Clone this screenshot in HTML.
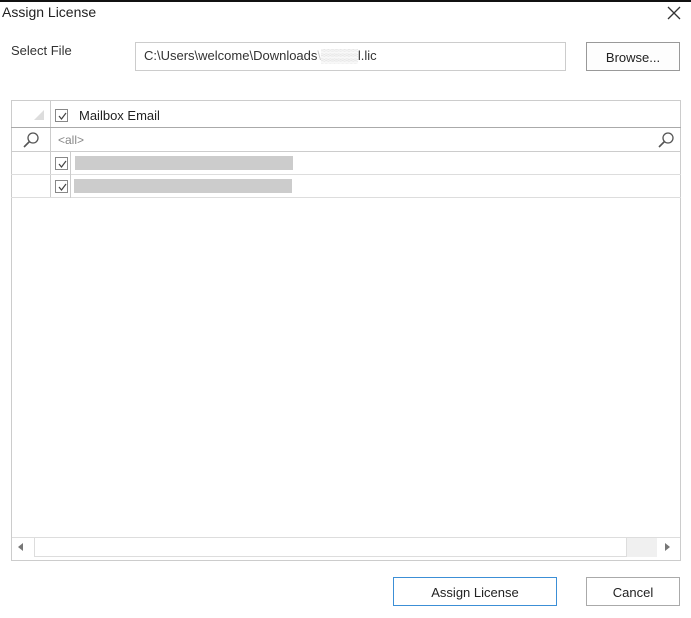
<!DOCTYPE html>
<html><head><style>
body{margin:0;width:691px;height:618px;background:#fff;position:relative;overflow:hidden;font-family:"Liberation Sans",sans-serif;color:#222;}
.a{position:absolute;box-sizing:border-box;}
.cb{position:absolute;width:13px;height:13px;border:1px solid #888;box-sizing:border-box;background:#fff;}
.cb svg{position:absolute;left:1px;top:1px}
</style></head><body>
<div class="a" style="left:0;top:0;width:691px;height:2px;background:#111"></div>
<div class="a" style="left:2px;top:4px;font-size:14px">Assign License</div>
<svg class="a" style="left:667px;top:6px" width="14" height="14"><path d="M1 1L13 13M13 1L1 13" stroke="#333" stroke-width="1.3"/></svg>
<div class="a" style="left:11px;top:43px;font-size:13px;color:#333">Select File</div>
<div class="a" style="left:135px;top:42px;width:431px;height:29px;border:1px solid #ccc;font-size:13px;padding:5px 0 0 8px;color:#333">C:\Users\welcome\Downloads<span style="color:#ccc">\▒▒▒▒</span>l.lic</div>
<div class="a" style="left:586px;top:42px;width:94px;height:29px;border:1px solid #999;font-size:13px;text-align:center;padding-top:7px;background:#fdfdfd">Browse...</div>
<div class="a" style="left:11px;top:100px;width:670px;height:461px;border:1px solid #ccc"></div>
<div class="a" style="left:11px;top:100px;width:40px;height:98px;border-right:1px solid #ccc"></div>
<div class="a" style="left:11px;top:127px;width:670px;height:1px;background:#aaa"></div>
<div class="a" style="left:11px;top:151px;width:670px;height:1px;background:#ccc"></div>
<div class="a" style="left:11px;top:174px;width:670px;height:1px;background:#ddd"></div>
<div class="a" style="left:11px;top:197px;width:670px;height:1px;background:#ddd"></div>
<svg class="a" style="left:34px;top:110px" width="10" height="10"><path d="M10 0L10 10L0 10Z" fill="#ddd"/></svg>
<div class="cb" style="left:55px;top:109px"><svg width="11" height="11"><path d="M2 5L4.5 8L9 2" stroke="#444" fill="none" stroke-width="1.2"/></svg></div>
<div class="a" style="left:79px;top:108px;font-size:13px">Mailbox Email</div>
<svg class="a" style="left:22px;top:131px" width="18" height="18"><circle cx="11" cy="7" r="5" stroke="#555" fill="none" stroke-width="1.3"/><path d="M7.5 10.5L2 16" stroke="#555" stroke-width="1.6"/></svg>
<div class="a" style="left:58px;top:133px;font-size:12px;color:#888">&lt;all&gt;</div>
<svg class="a" style="left:657px;top:131px" width="18" height="18"><circle cx="11" cy="7" r="5" stroke="#555" fill="none" stroke-width="1.3"/><path d="M7.5 10.5L2 16" stroke="#555" stroke-width="1.6"/></svg>
<div class="cb" style="left:55px;top:157px"><svg width="11" height="11"><path d="M2 5L4.5 8L9 2" stroke="#444" fill="none" stroke-width="1.2"/></svg></div>
<div class="cb" style="left:55px;top:180px"><svg width="11" height="11"><path d="M2 5L4.5 8L9 2" stroke="#444" fill="none" stroke-width="1.2"/></svg></div>
<div class="a" style="left:70px;top:152px;width:1px;height:46px;background:#ccc"></div>
<div class="a" style="left:75px;top:156px;width:218px;height:14px;background:#ccc"></div>
<div class="a" style="left:74px;top:179px;width:218px;height:14px;background:#ccc"></div>
<div class="a" style="left:12px;top:537px;width:668px;height:20px;border-top:1px solid #ddd;background:#fff"></div>
<div class="a" style="left:34px;top:537px;width:593px;height:20px;border:1px solid #ddd"></div>
<div class="a" style="left:627px;top:538px;width:30px;height:19px;background:#f0f0f0"></div>
<svg class="a" style="left:17px;top:542px" width="8" height="10"><path d="M6 1L1 5L6 9Z" fill="#777"/></svg>
<svg class="a" style="left:664px;top:542px" width="8" height="10"><path d="M1 1L6 5L1 9Z" fill="#777"/></svg>
<div class="a" style="left:393px;top:577px;width:164px;height:29px;border:1px solid #3c8fd6;font-size:13px;text-align:center;padding-top:7px">Assign License</div>
<div class="a" style="left:586px;top:577px;width:94px;height:29px;border:1px solid #aaa;font-size:13px;text-align:center;padding-top:7px">Cancel</div>
</body></html>
